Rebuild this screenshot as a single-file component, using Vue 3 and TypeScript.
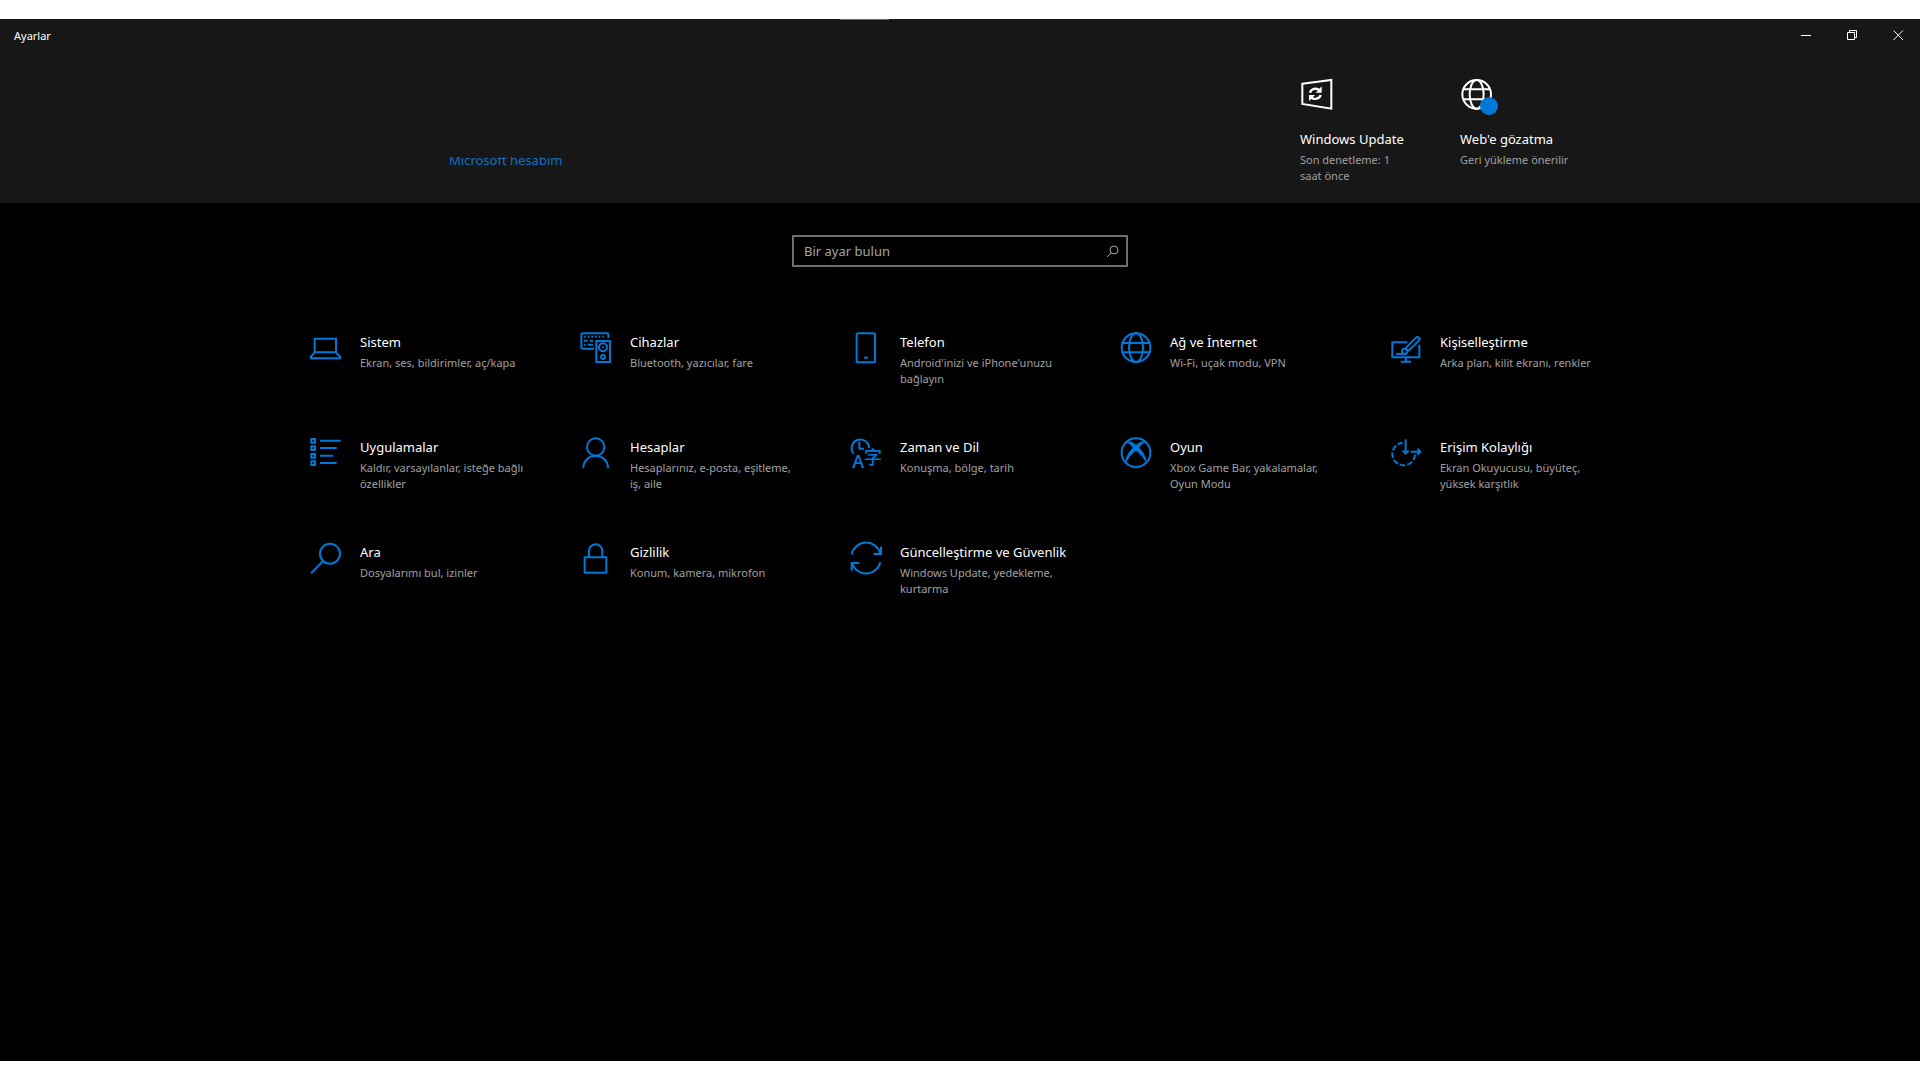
<script setup lang="ts">
type IconName =
  | 'system' | 'devices' | 'phone' | 'network' | 'personalization'
  | 'apps' | 'accounts' | 'time' | 'gaming' | 'access'
  | 'search' | 'privacy' | 'update'

interface Category {
  icon: IconName
  title: string
  text: string
}

const categories: Category[] = [
  { icon: 'system', title: 'Sistem', text: 'Ekran, ses, bildirimler, aç/kapa' },
  { icon: 'devices', title: 'Cihazlar', text: 'Bluetooth, yazıcılar, fare' },
  { icon: 'phone', title: 'Telefon', text: "Android'inizi ve iPhone'unuzu bağlayın" },
  { icon: 'network', title: 'Ağ ve İnternet', text: 'Wi-Fi, uçak modu, VPN' },
  { icon: 'personalization', title: 'Kişiselleştirme', text: 'Arka plan, kilit ekranı, renkler' },
  { icon: 'apps', title: 'Uygulamalar', text: 'Kaldır, varsayılanlar, isteğe bağlı özellikler' },
  { icon: 'accounts', title: 'Hesaplar', text: 'Hesaplarınız, e-posta, eşitleme, iş, aile' },
  { icon: 'time', title: 'Zaman ve Dil', text: 'Konuşma, bölge, tarih' },
  { icon: 'gaming', title: 'Oyun', text: 'Xbox Game Bar, yakalamalar, Oyun Modu' },
  { icon: 'access', title: 'Erişim Kolaylığı', text: 'Ekran Okuyucusu, büyüteç, yüksek karşıtlık' },
  { icon: 'search', title: 'Ara', text: 'Dosyalarımı bul, izinler' },
  { icon: 'privacy', title: 'Gizlilik', text: 'Konum, kamera, mikrofon' },
  { icon: 'update', title: 'Güncelleştirme ve Güvenlik', text: 'Windows Update, yedekleme, kurtarma' },
]
</script>

<template>
  <div class="page">
    <div class="window">
      <span class="accent"></span>
      <header class="header">
        <div class="titlebar">
          <h1 class="caption">Ayarlar</h1>
          <div class="controls">
            <button type="button" aria-label="Simge durumuna küçült">
              <svg viewBox="0 0 11 11"><path d="M0 5.5H10" /></svg>
            </button>
            <button type="button" aria-label="Önceki boyut">
              <svg viewBox="0 0 11 11"><path d="M.5 2.5h7v7h-7zM2.5 2.5v-2h7v7h-2" /></svg>
            </button>
            <button type="button" aria-label="Kapat">
              <svg viewBox="0 0 11 11"><path d="M.5 .5l9.5 9.5M10 .5L.5 10" /></svg>
            </button>
          </div>
        </div>
        <div class="banner">
          <a class="account" href="#">Microsoft hesabım</a>
          <a class="quick" href="#">
            <span class="quick-icon">
              <svg class="icon" viewBox="0 0 96 96">
                <path d="M7 14L94 3V89L7 75Z" />
                <path d="M30 41a17 15 0 0 1 29-7M62 48a17 15 0 0 1-29 7" stroke-width="7" />
                <path d="M65 22V41H47ZM27 66V48H45Z" fill="currentColor" stroke="none" />
              </svg>
            </span>
            <span class="name">Windows Update</span>
            <span class="text">Son denetleme: 1 saat önce</span>
          </a>
          <a class="quick" href="#">
            <span class="quick-icon">
              <svg class="icon" viewBox="0 0 96 96">
                <circle cx="50" cy="46" r="43" />
                <ellipse cx="50" cy="46" rx="21" ry="43" />
                <path d="M10 31H90M10 61H90" />
              </svg>
              <span class="badge"></span>
            </span>
            <span class="name">Web'e gözatma</span>
            <span class="text">Geri yükleme önerilir</span>
          </a>
        </div>
      </header>

      <main class="main">
        <form class="search" @submit.prevent>
          <input type="text" placeholder="Bir ayar bulun" aria-label="Bir ayar bulun" />
          <button type="submit" aria-label="Ara">
            <svg viewBox="0 0 13 13"><circle cx="8" cy="5" r="4" /><path d="M5 8L1 12" /></svg>
          </button>
        </form>

        <nav class="grid">
          <a v-for="c in categories" :key="c.icon" class="tile" href="#">
            <svg class="icon" viewBox="0 0 96 96">
              <template v-if="c.icon === 'system'">
                <path d="M14 20H78V61H14ZM14 62L3 73V79H90V73L78 62" />
              </template>
              <template v-else-if="c.icon === 'devices'">
                <path d="M42 50H8q-4 0-4-4V8q0-4 4-4h74q3 0 3 3v11M49 27H90V90H49Z" />
                <path d="M12 14h5M23 14h5M34 14h5M45 14h5M56 14h5M67 14h5M12 26h11M30 26h9M12 38h5M23 38h16" />
                <circle cx="69" cy="46" r="12" /><circle cx="69" cy="75" r="6" />
                <circle cx="69" cy="46" r="3" fill="currentColor" stroke="none" />
              </template>
              <template v-else-if="c.icon === 'phone'">
                <rect x="20" y="4" width="55" height="87" rx="5" /><path d="M42 77h12" />
              </template>
              <template v-else-if="c.icon === 'network'">
                <circle cx="48" cy="47" r="43" /><ellipse cx="48" cy="47" rx="21" ry="43" />
                <path d="M8 33H88M8 61H88" />
              </template>
              <template v-else-if="c.icon === 'personalization'">
                <path d="M52 31H7V76H88V38M48 76V89M32 89H63" />
                <path d="M46 49L78 17q5-4 9 0q4 4 0 9L54 58M18 66H42" />
                <circle cx="44" cy="58" r="8" />
              </template>
              <template v-else-if="c.icon === 'apps'">
                <path d="M4 6h11v11H4zM4 28h11v11H4zM4 51h11v11H4zM4 73h11v11H4z" />
                <path d="M30 11H92M30 33H80M30 56H69M30 78H80" />
              </template>
              <template v-else-if="c.icon === 'accounts'">
                <circle cx="47" cy="30" r="26" /><path d="M10 93a37 37 0 0 1 74 0" />
              </template>
              <template v-else-if="c.icon === 'time'">
                <path d="M11 50A26 26 0 1 1 57 33M28 15V35H42" />
                <text x="7" y="93" class="latin">A</text>
                <text x="42" y="82" class="cjk">字</text>
              </template>
              <template v-else-if="c.icon === 'gaming'">
                <circle cx="48" cy="47" r="43" />
                <path
                  d="M48 24C40 16 30 10 20 15C28 20 35 26 38 32C24 47 16 62 16 79C25 62 38 48 48 41C58 48 71 62 80 79C80 62 72 47 58 32C61 26 68 20 76 15C66 10 56 16 48 24Z"
                  fill="currentColor" stroke="none"
                />
              </template>
              <template v-else-if="c.icon === 'access'">
                <path d="M75 53A34 34 0 1 1 38 17" stroke-dasharray="17 6" />
                <path d="M47 7V50M38 41L47 50L56 41M62 44H91M82 35L91 44L82 53" />
              </template>
              <template v-else-if="c.icon === 'search'">
                <circle cx="60" cy="35" r="30" /><path d="M39 57L3 94" />
              </template>
              <template v-else-if="c.icon === 'privacy'">
                <path d="M14 46H79V92H14ZM27 46V27a20 20 0 0 1 40 0V46" />
              </template>
              <template v-else>
                <path d="M5 38A44 44 0 0 1 91 35M93 14V36H70M91 61A44 44 0 0 1 6 63M5 86V63H28" />
              </template>
            </svg>
            <span class="label">
              <span class="name">{{ c.title }}</span>
              <span class="text">{{ c.text }}</span>
            </span>
          </a>
        </nav>
      </main>
    </div>
  </div>
</template>

<style>
body {
  margin: 0;
  background: #fff;
}
</style>

<style scoped>
* {
  box-sizing: border-box;
}
.page {
  display: flex;
  flex-direction: column;
  min-height: 100vh;
  padding: 19px 0;
  font-family: 'Noto Sans', 'Open Sans', sans-serif;
  background: #fff;
}
.window {
  position: relative;
  flex: 1;
  background: #000;
  color: #fff;
}
.accent {
  position: absolute;
  top: 0;
  left: 840px;
  width: 49px;
  height: 1px;
  background: #1f84b8;
}
.header {
  min-height: 184px;
  background: #171717;
}
.titlebar {
  display: flex;
  justify-content: space-between;
  height: 32px;
}
.caption {
  margin: 0 0 0 14px;
  font-size: 11px;
  font-weight: 400;
  line-height: 34px;
}
.controls {
  display: flex;
}
.controls button {
  display: grid;
  place-items: center;
  width: 46px;
  padding: 0 0 0 2px;
  border: 0;
  background: none;
  color: #fff;
}
.controls svg {
  width: 11px;
  height: 11px;
  fill: none;
  stroke: currentColor;
}
.banner {
  display: flex;
  justify-content: flex-end;
  align-items: flex-start;
  max-width: 1350px;
  margin: 0 auto;
  padding: 28px 15px 0 164px;
}
.account {
  position: relative;
  margin: 71px auto 0 0;
  font-size: 13px;
  line-height: 20px;
  color: #1371c1;
  text-decoration: none;
}
/* the header edge hides the tops of the letters */
.account::after {
  content: '';
  position: absolute;
  inset: 0 0 auto;
  height: 7px;
  background: #171717;
}
.quick {
  display: flex;
  flex-direction: column;
  width: 160px;
  padding-right: 48px;
  color: #fff;
  text-decoration: none;
}
.quick-icon {
  position: relative;
  width: 32px;
  height: 32px;
  margin-bottom: 18px;
}
.badge {
  position: absolute;
  top: 18px;
  left: 20px;
  width: 18px;
  height: 18px;
  border-radius: 50%;
  background: #0078d7;
}
.icon {
  display: block;
  flex: none;
  width: 32px;
  height: 32px;
  fill: none;
  stroke: currentColor;
  stroke-width: 6;
  overflow: visible;
}
.name {
  display: block;
  font-size: 13px;
  line-height: 20px;
  white-space: nowrap;
  color: #fff;
}
.text {
  display: block;
  margin-top: 3px;
  font-size: 11px;
  line-height: 16px;
  color: #a0a0a0;
}
.main {
  padding: 32px 20px;
}
.search {
  display: flex;
  width: 336px;
  height: 32px;
  margin: 0 auto;
  border: 2px solid #6e6e6e;
}
.search input {
  flex: 1;
  min-width: 0;
  padding: 0 10px;
  border: 0;
  outline: 0;
  background: none;
  color: #fff;
  font: inherit;
  font-size: 13px;
}
.search input::placeholder {
  color: #a5a5a5;
  opacity: 1;
}
.search button {
  display: grid;
  place-items: center;
  width: 28px;
  padding: 0;
  border: 0;
  background: none;
  color: #a5a5a5;
}
.search svg {
  width: 13px;
  height: 13px;
  fill: none;
  stroke: currentColor;
}
.grid {
  display: grid;
  grid-template-columns: repeat(auto-fill, 270px);
  grid-auto-rows: 105px;
  max-width: 1350px;
  margin: 65px auto 0;
}
.tile {
  display: flex;
  gap: 18px;
  padding: 0 23px 0 25px;
  color: #0078d7;
  text-decoration: none;
}
.label {
  flex: 1;
  min-width: 0;
}
.latin,
.cjk {
  fill: currentColor;
  stroke: none;
}
.latin {
  font: 600 54px 'Open Sans', sans-serif;
}
.cjk {
  font: 500 54px 'Noto Sans CJK SC', sans-serif;
}
</style>
